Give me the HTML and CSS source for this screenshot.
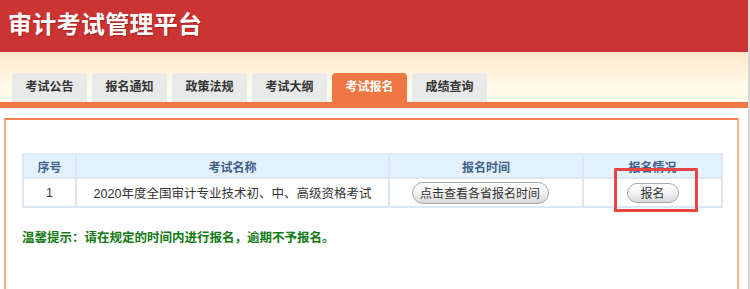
FILE: index.html
```html
<!DOCTYPE html>
<html lang="zh-CN">
<head>
    <meta charset="UTF-8">
    <title>审计考试管理平台</title>
    <link rel="stylesheet" href="styles.css">
</head>
<body>

<div class="header">
    <h1>审计考试管理平台</h1>
</div>

<div class="nav">
    <ul class="tabs">
        <li>考试公告</li>
        <li>报名通知</li>
        <li>政策法规</li>
        <li>考试大纲</li>
        <li class="active">考试报名</li>
        <li>成绩查询</li>
    </ul>
</div>

<div class="content">
    <table class="exam-table">
        <tr>
            <th class="col-no">序号</th>
            <th class="col-name">考试名称</th>
            <th class="col-time">报名时间</th>
            <th class="col-state">报名情况</th>
        </tr>
        <tr>
            <td>1</td>
            <td>2020年度全国审计专业技术初、中、高级资格考试</td>
            <td><button class="pill pill-wide">点击查看各省报名时间</button></td>
            <td>
                <span class="mark-wrap">
                    <button class="pill pill-small">报名</button>
                    <span class="mark"></span>
                </span>
            </td>
        </tr>
    </table>
    <p class="tip">温馨提示：请在规定的时间内进行报名，逾期不予报名。</p>
</div>

</body>
</html>
```

FILE: styles.css
```css
html {
    overflow: hidden;
}
body {
    margin: 0;
    font-family: "Liberation Sans", "Noto Sans CJK SC", sans-serif;
    font-size: 12px;
    color: #333;
    background: #fff;
    border-right: 2px solid #d8d8d8;
}
.header {
    height: 52px;
    background: #cc3333;
    padding-left: 8px;
}
.header h1 {
    margin: 0;
    line-height: 50px;
    font-size: 24px;
    font-weight: bold;
    color: #fff;
    letter-spacing: 0.3px;
    text-shadow: 1px 1px 1px rgba(80, 0, 0, 0.35);
}
.nav {
    height: 50px;
    background: linear-gradient(#fde7cc, #fffbea 70%, #fffcee);
    border-bottom: 6px solid #ee7744;
}
.tabs {
    list-style: none;
    margin: 0;
    padding: 21px 0 0 12px;
    display: flex;
    gap: 5px;
}
.tabs li {
    width: 75px;
    height: 29px;
    line-height: 29px;
    text-align: center;
    font-weight: bold;
    font-size: 12px;
    color: #333;
    background: #e9e9e9;
    border-radius: 4px 4px 0 0;
}
.tabs li.active {
    background: #ee7744;
    color: #fff;
}
.content {
    margin: 10px 9px 0 4px;
    height: 136px;
    border-top: 2px solid #ef7f4f;
    border-left: 2px solid #f6a888;
    border-right: 2px solid #f8b496;
    padding: 33px 17px 0 16px;
}
.exam-table {
    width: 701px;
    border-collapse: collapse;
}
.exam-table th,
.exam-table td {
    border: 2px solid #dbe8f4;
    text-align: center;
    padding: 0;
}
.exam-table th {
    height: 22px;
    background: #e2f1fb;
    color: #3f5f8c;
    font-weight: bold;
    font-size: 12px;
}
.exam-table td {
    height: 27px;
    font-size: 12.5px;
    color: #333;
}
.col-no { width: 51px; }
.col-name { width: 311px; }
.col-time { width: 192px; }
.pill {
    font-family: "Liberation Sans", "Noto Sans CJK SC", sans-serif;
    font-size: 12px;
    color: #333;
    border: 1px solid #a9a9a9;
    border-radius: 12px;
    background: linear-gradient(#ffffff, #f2f2f2 50%, #d9d9d9);
    padding: 0;
    vertical-align: middle;
}
.pill-wide {
    width: 137px;
    height: 22px;
    margin-right: 12px;
}
.pill-small {
    width: 52px;
    height: 20px;
}
.mark-wrap {
    position: relative;
    display: inline-block;
    vertical-align: middle;
}
.mark {
    position: absolute;
    left: -13px;
    top: -15px;
    width: 78px;
    height: 38px;
    border: 3px solid #e84444;
    border-radius: 1px;
}
.tip {
    margin: 19px 0 0;
    color: #127a12;
    font-weight: bold;
    font-size: 12.5px;
}
```
